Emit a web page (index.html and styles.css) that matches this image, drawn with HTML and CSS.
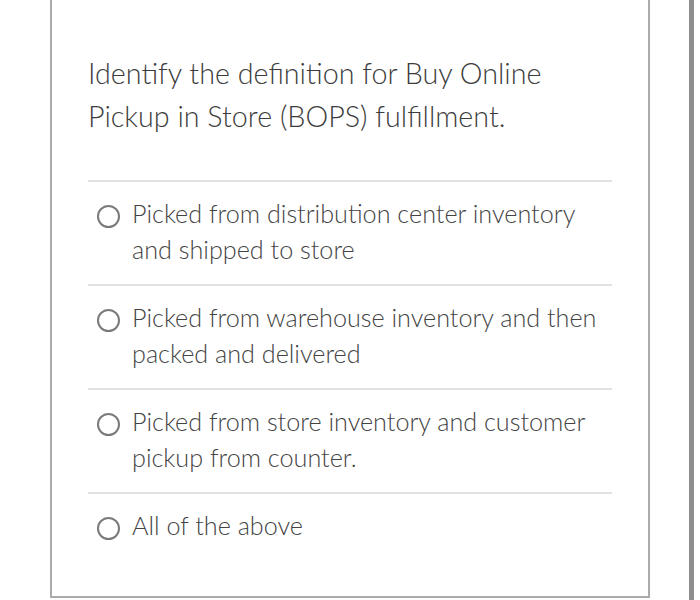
FILE: index.html
```html
<!DOCTYPE html>
<html>
<head>
<meta charset="utf-8">
<link rel="stylesheet" href="styles.css">
</head>
<body>
<div class="page">
  <div class="card">
    <p class="question">Identify the definition for Buy Online Pickup in Store (BOPS) fulfillment.</p>
    <ul class="options">
      <li class="option"><span class="radio"></span><span class="label">Picked from distribution center inventory and shipped to store</span></li>
      <li class="option"><span class="radio"></span><span class="label">Picked from warehouse inventory and then packed and delivered</span></li>
      <li class="option"><span class="radio"></span><span class="label">Picked from store inventory and customer pickup from counter.</span></li>
      <li class="option"><span class="radio"></span><span class="label">All of the above</span></li>
    </ul>
  </div>
  <div class="bar"></div>
</div>
</body>
</html>
```

FILE: styles.css
```css
html, body {
  margin: 0;
  padding: 0;
  background: #fff;
}
.page {
  display: flex;
  height: 600px;
  overflow: hidden;
}
.card {
  box-sizing: border-box;
  margin-left: 50px;
  width: 600px;
  height: 598px;
  border: 2px solid #ababab;
  border-top: none;
  padding: 52px 36px 0 36px;
  font-family: Lato, "Noto Sans", sans-serif;
}
.question {
  margin: 0 0 42px 0;
  font-weight: 300;
  font-size: 28.7px;
  line-height: 43px;
  color: #3c3c3c;
  width: 480px;
}
.options {
  list-style: none;
  margin: 0;
  padding: 0;
}
.option {
  display: flex;
  align-items: flex-start;
  gap: 12px;
  border-top: 2px solid #e2e2e2;
  padding: 13px 0 17px 9px;
  min-height: 72px;
}
.radio {
  flex: none;
  box-sizing: border-box;
  width: 23px;
  height: 23px;
  border: 2.5px solid #7a7a7a;
  border-radius: 50%;
  margin-top: 10px;
}
.label {
  font-weight: 300;
  font-size: 25.2px;
  line-height: 36px;
  color: #444;
  width: 470px;
}
.bar {
  flex: none;
  margin-left: 39px;
  width: 5px;
  height: 600px;
  background: #8e8e8e;
}
```
